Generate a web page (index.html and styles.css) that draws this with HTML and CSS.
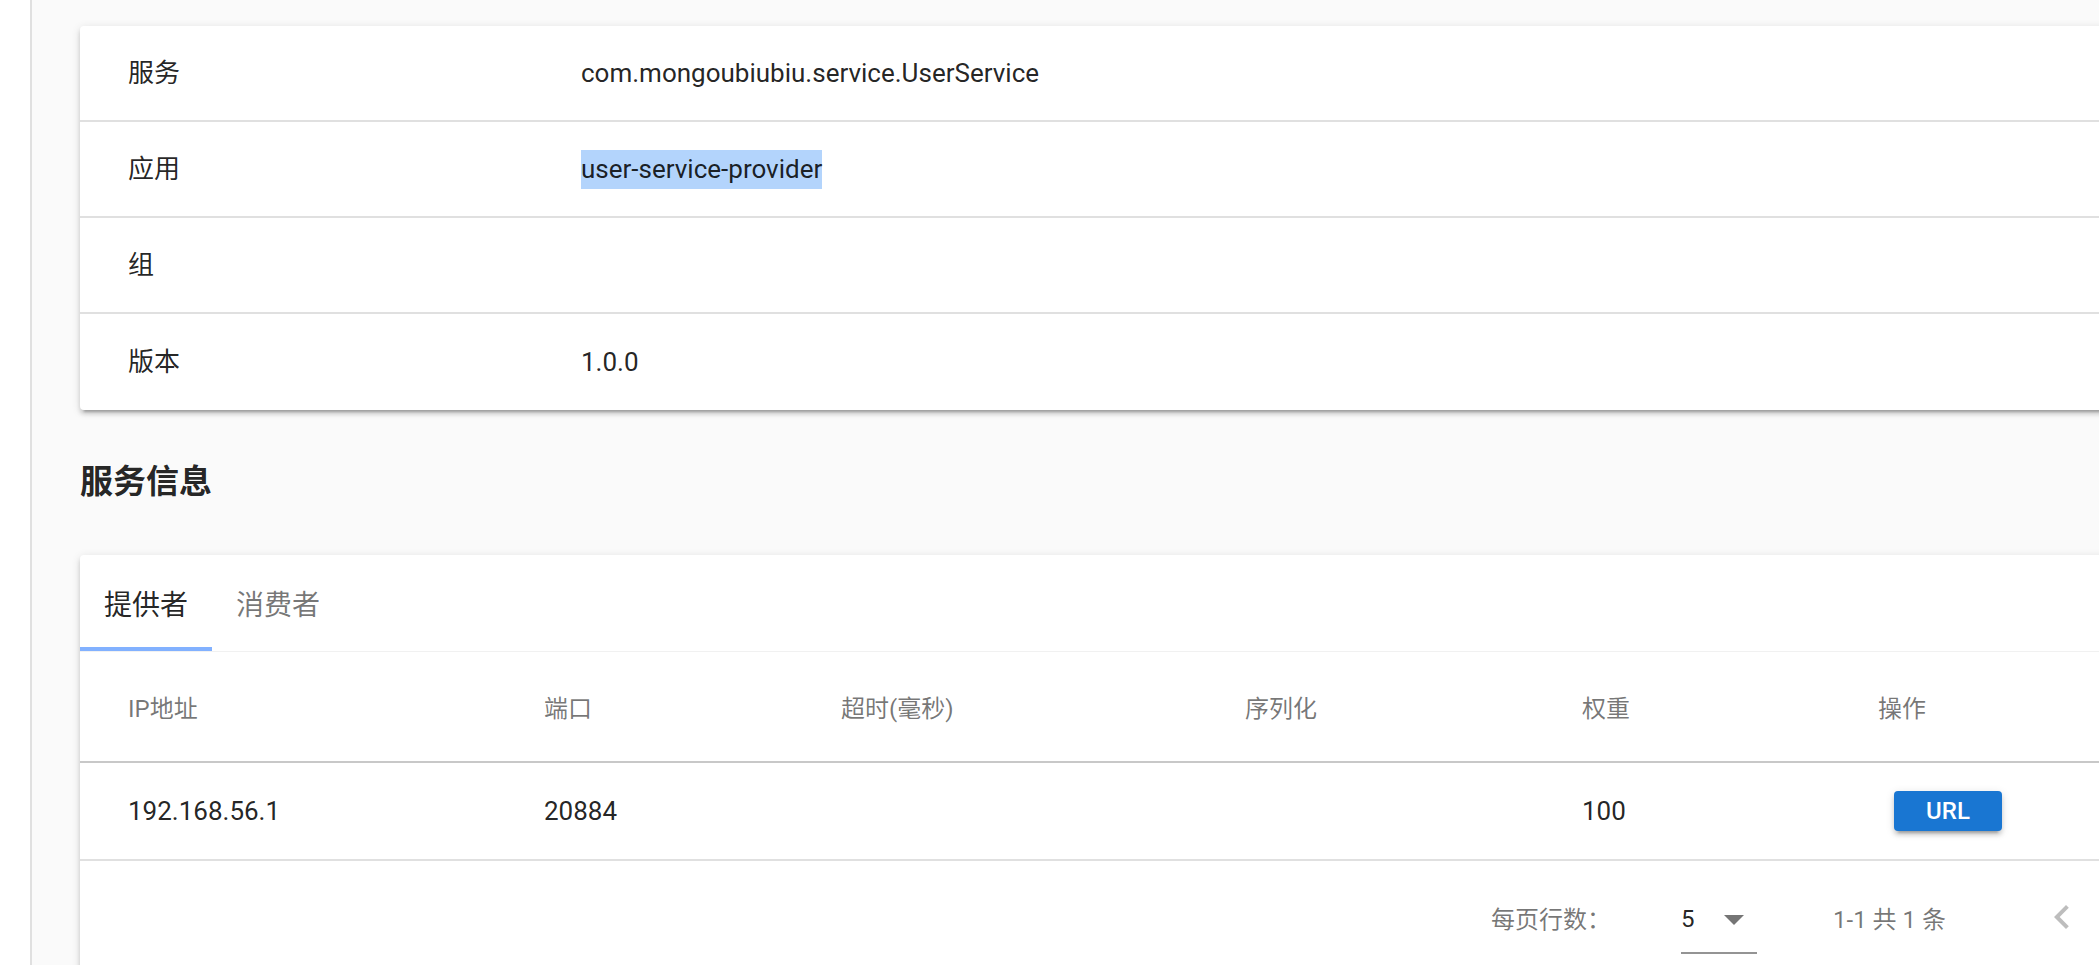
FILE: index.html
```html
<!DOCTYPE html>
<html lang="zh-CN">
<head>
<meta charset="utf-8">
<title>服务详情</title>
<link rel="stylesheet" href="styles.css">
</head>
<body>
<div class="app">
  <aside class="drawer"></aside>
  <main class="main">
    <section class="card info-card">
      <div class="info-row">
        <div class="info-label">服务</div>
        <div class="info-value">com.mongoubiubiu.service.UserService</div>
      </div>
      <div class="info-row">
        <div class="info-label">应用</div>
        <div class="info-value"><span class="selected">user-service-provider</span></div>
      </div>
      <div class="info-row">
        <div class="info-label">组</div>
        <div class="info-value"></div>
      </div>
      <div class="info-row">
        <div class="info-label">版本</div>
        <div class="info-value">1.0.0</div>
      </div>
    </section>

    <h2 class="section-title">服务信息</h2>

    <section class="card tabs-card">
      <div class="tabs">
        <div class="tab active">提供者</div>
        <div class="tab">消费者</div>
      </div>
      <div class="table">
        <div class="grid-row thead">
          <div class="cell">IP地址</div>
          <div class="cell">端口</div>
          <div class="cell">超时(毫秒)</div>
          <div class="cell">序列化</div>
          <div class="cell">权重</div>
          <div class="cell">操作</div>
        </div>
        <div class="grid-row tbody-row">
          <div class="cell">192.168.56.1</div>
          <div class="cell">20884</div>
          <div class="cell"></div>
          <div class="cell"></div>
          <div class="cell">100</div>
          <div class="cell"><button class="btn-url" type="button">URL</button></div>
        </div>
        <div class="actions">
          <div class="actions-select">
            <span class="actions-label">每页行数：</span>
            <div class="rows-select">
              <span class="rows-value">5</span>
              <svg class="drop-icon" viewBox="0 0 24 24" width="48" height="48"><path d="M7 10l5 5 5-5z"/></svg>
            </div>
          </div>
          <div class="range-controls">
            <span class="pagination">1-1 共 1 条</span>
            <span class="icon-btn disabled"><svg viewBox="0 0 24 24" width="48" height="48"><path d="M15.41 7.41L14 6l-6 6 6 6 1.41-1.41L10.83 12z"/></svg></span>
            <span class="icon-btn disabled"><svg viewBox="0 0 24 24" width="48" height="48"><path d="M8.59 16.59L10 18l6-6-6-6-1.41 1.41L13.17 12z"/></svg></span>
          </div>
        </div>
      </div>
    </section>
  </main>
</div>
</body>
</html>
```

FILE: styles.css
```css
html, body {
  margin: 0;
  padding: 0;
  overflow: hidden;
}

body {
  width: 2099px;
  height: 965px;
  background: #fafafa;
  font-family: Roboto, "Noto Sans CJK SC", sans-serif;
  color: rgba(0, 0, 0, 0.87);
}

.app {
  display: flex;
  min-height: 965px;
}

.drawer {
  flex: 0 0 30px;
  background: #ffffff;
  border-right: 2px solid #e0e0e0;
}

.main {
  flex: 0 0 auto;
  padding: 26px 0 0 48px;
}

.card {
  width: 2160px;
  background: #ffffff;
  border-radius: 4px;
  box-shadow: 0 6px 2px -4px rgba(0, 0, 0, 0.2), 0 4px 4px 0 rgba(0, 0, 0, 0.14), 0 2px 10px 0 rgba(0, 0, 0, 0.12);
}

/* info card */
.info-row {
  display: grid;
  grid-template-columns: 453px 1fr;
  align-items: center;
  height: 96px;
  box-sizing: border-box;
  border-bottom: 2px solid #e0e0e0;
  font-size: 26px;
  line-height: 39px;
}

.info-row:last-child {
  border-bottom: 0;
}

.info-label,
.info-value {
  padding-left: 48px;
  white-space: nowrap;
}

.selected {
  display: inline-block;
  line-height: 39px;
  background: #b3d4fc;
}

/* heading */
.section-title {
  margin: 48px 0 49px;
  font-size: 33px;
  line-height: 48px;
  font-weight: 700;
  color: rgba(0, 0, 0, 0.87);
}

/* tabs */
.tabs {
  display: flex;
  height: 97px;
  box-sizing: border-box;
  border-bottom: 1px solid #f1f1f1;
}

.tab {
  display: flex;
  align-items: center;
  padding: 4px 24px 0;
  box-sizing: border-box;
  height: 96px;
  border-bottom: 4px solid transparent;
  font-size: 28px;
  color: rgba(0, 0, 0, 0.54);
}

.tab.active {
  color: rgba(0, 0, 0, 0.87);
  border-bottom-color: #82b1ff;
}

/* table */
.grid-row {
  display: grid;
  grid-template-columns: 416px 297px 404px 337px 296px 1fr;
  align-items: center;
  box-sizing: border-box;
}

.cell {
  padding-left: 48px;
  white-space: nowrap;
}

.thead {
  height: 111px;
  border-bottom: 2px solid #c8c8c8;
  font-size: 24px;
  color: rgba(0, 0, 0, 0.54);
}

.tbody-row {
  height: 98px;
  border-bottom: 2px solid #e0e0e0;
  font-size: 26px;
}

.btn-url {
  margin-left: 16px;
  width: 108px;
  height: 40px;
  padding: 0;
  border: 0;
  border-radius: 4px;
  background: #1976d2;
  color: #ffffff;
  font-family: Roboto, sans-serif;
  font-size: 24px;
  font-weight: 500;
  letter-spacing: 0;
  box-shadow: 0 6px 2px -4px rgba(0, 0, 0, 0.2), 0 4px 4px 0 rgba(0, 0, 0, 0.14), 0 2px 10px 0 rgba(0, 0, 0, 0.12);
}

/* footer actions */
.actions {
  display: flex;
  justify-content: flex-end;
  align-items: center;
  height: 112px;
  padding-right: 22px;
  font-size: 24px;
  color: rgba(0, 0, 0, 0.54);
}

.actions-select {
  display: flex;
  align-items: center;
  margin-right: 28px;
}

.rows-select {
  display: flex;
  align-items: center;
  width: 76px;
  height: 74px;
  box-sizing: border-box;
  padding-top: 6px;
  margin-left: 70px;
  border-bottom: 2px solid rgba(0, 0, 0, 0.42);
}

.rows-value {
  color: rgba(0, 0, 0, 0.87);
}

.drop-icon {
  margin-left: auto;
  margin-right: -1px;
  fill: rgba(0, 0, 0, 0.54);
}

.range-controls {
  display: flex;
  align-items: center;
}

.pagination {
  margin: 0 64px 0 48px;
}

.icon-btn {
  display: flex;
  align-items: center;
  justify-content: center;
  width: 72px;
  height: 72px;
  margin: 0 16px;
}

.icon-btn.disabled svg {
  fill: rgba(0, 0, 0, 0.26);
}
```
